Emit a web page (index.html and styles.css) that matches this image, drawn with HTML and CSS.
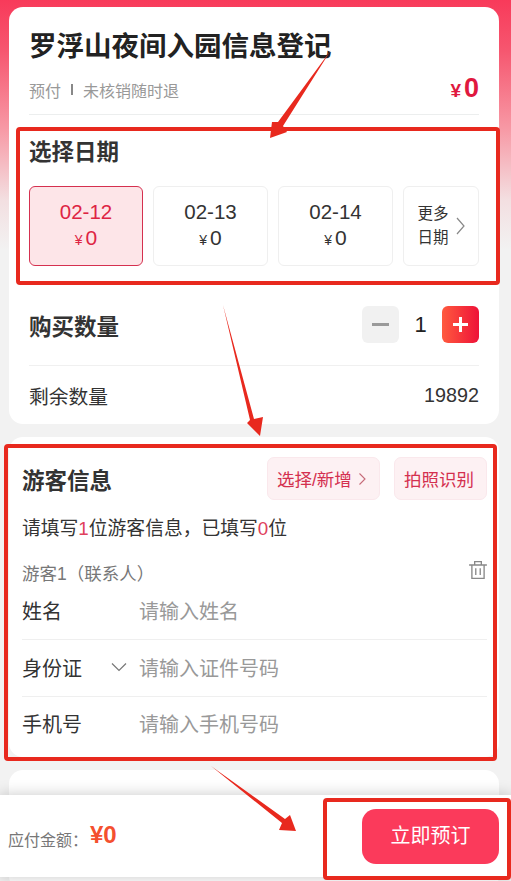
FILE: index.html
```html
<!DOCTYPE html>
<html lang="zh">
<head>
<meta charset="utf-8">
<title>罗浮山夜间入园信息登记</title>
<link rel="stylesheet" href="styles.css">
</head>
<body>
<div class="page">
  <main class="content">
    <section class="card card-main">
      <h1 class="title">罗浮山夜间入园信息登记</h1>
      <div class="meta">
        <span class="meta-text">预付<i class="sep"></i>未核销随时退</span>
        <span class="price"><small>¥</small>0</span>
      </div>
      <h2 class="section-title date-title">选择日期</h2>
      <div class="dates">
        <div class="date date-on"><span class="date-day">02-12</span><span class="date-price"><small>¥</small>0</span></div>
        <div class="date"><span class="date-day">02-13</span><span class="date-price"><small>¥</small>0</span></div>
        <div class="date"><span class="date-day">02-14</span><span class="date-price"><small>¥</small>0</span></div>
        <div class="date date-more">
          <span class="more-text">更多<br>日期</span>
          <svg class="more-chev" viewBox="0 0 10 18"><path d="M2 1l7 8-7 8"/></svg>
        </div>
      </div>
      <div class="qty">
        <h2 class="section-title qty-title">购买数量</h2>
        <div class="stepper">
          <span class="step step-minus"><svg viewBox="0 0 37 37"><path d="M10 18.500h17"/></svg></span>
          <span class="step-num">1</span>
          <span class="step step-plus"><svg viewBox="0 0 37 37"><path d="M11 18.500h15M18.500 11v15"/></svg></span>
        </div>
      </div>
      <div class="stock"><span>剩余数量</span><span>19892</span></div>
    </section>

    <section class="card card-guest">
      <div class="guest-top">
        <h2 class="section-title qty-title">游客信息</h2>
        <div class="guest-actions">
          <span class="pill pill-select">选择/新增<svg class="pill-chev" viewBox="0 0 8 14"><path d="M1.500 1.500L7 7l-5.500 5.500"/></svg></span>
          <span class="pill pill-photo">拍照识别</span>
        </div>
      </div>
      <p class="notice">请填写<em>1</em>位游客信息，已填写<em>0</em>位</p>
      <div class="guest-head">
        <span>游客1（联系人）</span>
        <svg class="trash" viewBox="0 0 18 18"><path d="M1 4.500h16M6 4V1.500h6V4M3.500 4.500v12h11v-12M7 7.500v6M11 7.500v6"/></svg>
      </div>
      <div class="field"><span class="field-label">姓名</span><span class="field-hint">请输入姓名</span></div>
      <div class="field">
        <span class="field-label">身份证<svg class="field-chev" viewBox="0 0 16 10"><path d="M1 1.500l7 7 7-7"/></svg></span>
        <span class="field-hint">请输入证件号码</span>
      </div>
      <div class="field field-last"><span class="field-label">手机号</span><span class="field-hint">请输入手机号码</span></div>
    </section>

    <section class="card card-next"></section>
  </main>

  <footer class="bar">
    <div class="total"><span class="total-label">应付金额：</span><strong class="total-num">¥0</strong></div>
    <button class="book">立即预订</button>
  </footer>

  <div class="mark mark-date"></div>
  <div class="mark mark-guest"></div>
  <div class="mark mark-book"></div>
  <svg class="arrows" viewBox="0 0 511 881">
    <polygon points="331,50 283,126 287,132 270,138 272,122 278,122"/>
    <polygon points="223,305 254,419 263,417 260,436 247,423 250,420"/>
    <polygon points="211,766 285,819 290,815 296,831 279,830 282,823"/>
  </svg>
</div>
</body>
</html>
```
FILE: styles.css
```css
* { box-sizing: border-box; }
html, body { margin: 0; padding: 0; }
body {
  font-family: "Liberation Sans", "Noto Sans CJK SC", sans-serif;
  color: #333;
}
.page {
  position: relative;
  width: 511px;
  height: 881px;
  overflow: hidden;
  background: linear-gradient(180deg, #f83a5a 0, #f6566f 50px, #f79aa6 130px, #f3dfe1 200px, #f2f2f2 250px);
}
.content { display: flex; flex-direction: column; padding: 7px 12px 0 9px; }
.card { background: #fff; border-radius: 14px; }

.card-main { padding: 21px 20px 0; height: 417px; }
.title { margin: 0; font-size: 27.500px; line-height: 38px; font-weight: 700; color: #222; white-space: nowrap; }
.meta {
  display: flex; justify-content: space-between; align-items: center;
  margin-top: 12px; height: 37px; padding-bottom: 13px;
  border-bottom: 1px solid #eceeee;
}
.meta-text { font-size: 16px; color: #999; display: flex; align-items: center; }
.sep { display: inline-block; width: 2px; height: 11px; background: #888; margin: 0 10px; }
.price { color: #e0193f; font-size: 27px; font-weight: 700; line-height: 24px; }
.price small { font-size: 19px; margin-right: 3px; font-weight: 700; }

.section-title { margin: 0; font-size: 22.500px; line-height: 30px; font-weight: 700; color: #333; white-space: nowrap; }
.date-title { margin-top: 23px; }
.qty-title { padding-top: 6px; }
.dates { display: flex; gap: 10px; margin-top: 18px; }
.date {
  flex: 0 0 115px; height: 80px;
  display: flex; flex-direction: column; align-items: center; justify-content: center;
  border: 1px solid #efefef; border-radius: 6px; color: #333;
}
.date-on { flex-basis: 114px; background: #fde5e8; border-color: #d5304f; color: #de2443; }
.date-day { font-size: 20.500px; line-height: 26px; }
.date-price { font-size: 21px; line-height: 25px; }
.date-price small { font-size: 14px; margin-right: 3px; }
.date-more { flex: 0 0 76px; flex-direction: row; gap: 6px; }
.more-text { font-size: 15.500px; line-height: 24px; }
.more-chev { width: 10px; height: 18px; fill: none; stroke: #888; stroke-width: 1.200; }

.qty {
  display: flex; justify-content: space-between; align-items: center;
  margin-top: 40px; padding-bottom: 22px; border-bottom: 1px solid #f0f0f0;
}
.stepper { display: flex; align-items: center; }
.step { width: 37px; height: 37px; border-radius: 6px; display: block; }
.step svg { display: block; width: 37px; height: 37px; fill: none; }
.step-minus { background: #f1f1f1; }
.step-minus path { stroke: #9a9a9a; stroke-width: 3; }
.step-plus { background: linear-gradient(90deg, #ff5a3e, #ee1238); }
.step-plus path { stroke: #fff; stroke-width: 3; }
.step-num { width: 43px; text-align: center; font-size: 22px; color: #222; }
.stock {
  display: flex; justify-content: space-between; align-items: center;
  height: 57px; padding-top: 2px; font-size: 19.800px; color: #333;
}

.card-guest { margin-top: 13px; padding: 20px 12px 5px 13px; height: 320px; }
.guest-top { display: flex; justify-content: space-between; align-items: center; }
.guest-actions { display: flex; gap: 14px; }
.pill {
  display: flex; align-items: center; height: 43px; padding: 0 9px;
  background: #fdf1f3; border: 1px solid #fae8ec; border-radius: 7px;
  font-size: 17.500px; color: #d4304f; white-space: nowrap;
}
.pill-select { width: 113px; }
.pill-photo { width: 93px; }
.pill-chev { width: 8px; height: 14px; margin-left: 6px; fill: none; stroke: #c66a78; stroke-width: 1.100; }
.notice { margin: 14px 0 0; font-size: 18.800px; line-height: 30px; color: #333; }
.notice em { font-style: normal; color: #e0405c; }
.guest-head {
  display: flex; justify-content: space-between; align-items: flex-start;
  margin-top: 18px; height: 21px; font-size: 17.500px; line-height: 24px; color: #777;
}
.trash { width: 20px; height: 20px; margin-top: -2px; margin-right: -1px; fill: none; stroke: #888; stroke-width: 1.200; }
.field {
  display: flex; align-items: center; height: 57px; padding-bottom: 2px;
  border-bottom: 1px solid #efefef; font-size: 20px;
}
.field-last { border-bottom: 0; padding-bottom: 4px; }
.field-label { flex: 0 0 117px; display: flex; align-items: center; color: #333; }
.field-chev { width: 16px; height: 10px; margin-left: 29px; fill: none; stroke: #777; stroke-width: 1.200; }
.field-hint { color: #999; }

.card-next { margin-top: 13px; height: 120px; }

.bar {
  position: absolute; left: 0; right: 0; top: 795px; height: 82px;
  display: flex; justify-content: space-between; align-items: center;
  padding: 0 12px 0 8px; background: #fff;
  box-shadow: 0 0 14px rgba(0,0,0,.22);
}
.total { display: flex; align-items: center; gap: 2px; }
.total-label { font-size: 16px; color: #777; padding-top: 5px; }
.total-num { font-size: 24px; color: #f4502f; font-weight: 700; margin-bottom: 2px; }
.book {
  width: 137px; height: 55px; border: 0; border-radius: 14px; padding: 0 0 4px;
  background: #fb3a5b; color: #fff; font: inherit; font-size: 20px;
}

.mark { position: absolute; border: 4px solid #e8291e; border-radius: 4px; pointer-events: none; }
.mark-date { left: 16px; top: 127px; width: 484px; height: 158px; }
.mark-guest { left: 4px; top: 444px; width: 493px; height: 317px; }
.mark-book { left: 323px; top: 798px; width: 188px; height: 82px; }
.arrows { position: absolute; left: 0; top: 0; width: 511px; height: 881px; fill: #e8291e; pointer-events: none; }
```
